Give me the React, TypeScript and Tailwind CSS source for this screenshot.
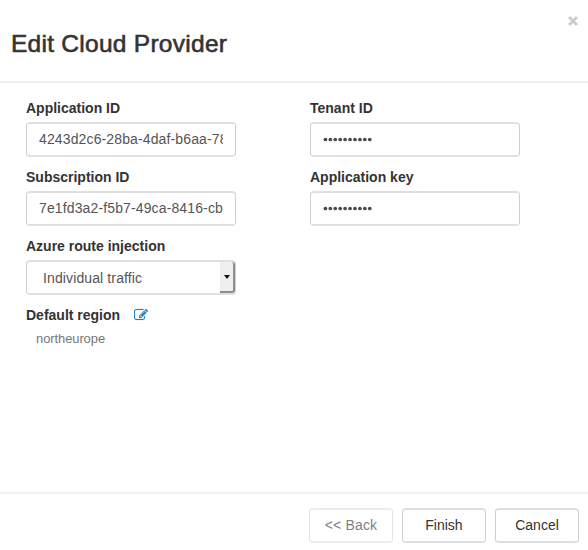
import React from "react";

const editPath =
  "M888 1184l116-116-152-152-116 116v56h96v96h56zm440-720q-16-16-33 1l-350 350q-17 17-1 33t33-1l350-350q17-17 1-33zm80 594v190q0 119-84.5 203.5t-203.5 84.5h-832q-119 0-203.5-84.5t-84.5-203.5v-832q0-119 84.5-203.5t203.5-84.5h832q63 0 117 25 15 7 18 23 3 17-9 29l-49 49q-14 14-32 8-23-6-45-6h-832q-66 0-113 47t-47 113v832q0 66 47 113t113 47h832q66 0 113-47t47-113v-126q0-13 9-22l64-64q15-15 35-7t20 29zm-96-738l288 288-672 672h-288v-288zm444 132l-92 92-288-288 92-92q28-28 68-28t68 28l152 152q28 28 28 68t-28 68z";

function Label({ children }: { children: React.ReactNode }) {
  return <div className="h-[23px] whitespace-nowrap text-[14px] leading-[18px] font-bold text-[#333]">{children}</div>;
}

const box = "h-[35px] w-[210px] rounded-[4px] border-x border-y-2 border-x-[#d0d0d0] border-y-[#e0e0e0] bg-white";

function TextField({ label, value }: { label: string; value: string }) {
  return (
    <div className="h-[69px]">
      <Label>{label}</Label>
      <div className={`${box} px-3`}>
        <div className="overflow-hidden whitespace-nowrap text-[14px] leading-[31px] tracking-[0.13px] text-[#555]">{value}</div>
      </div>
    </div>
  );
}

function SecretField({ label }: { label: string }) {
  return (
    <div className="h-[69px]">
      <Label>{label}</Label>
      <div className={`${box} flex items-center px-3`}>
        <svg className="h-[5px] w-[52px]" viewBox="0 0 52 5" fill="#4a4a4a">
          {Array.from({ length: 10 }, (_, i) => (
            <circle key={i} cx={2.4 + i * 4.93} cy={2.5} r={1.85} />
          ))}
        </svg>
      </div>
    </div>
  );
}

function Button({ children, disabled }: { children: React.ReactNode; disabled?: boolean }) {
  return (
    <button
      disabled={disabled}
      className={`h-[35px] w-[84px] rounded-[4px] border-x border-y-2 bg-white text-[14px] whitespace-nowrap ${
        disabled ? "border-x-[#e3e3e3] border-y-[#ececec] tracking-[0.15px] text-[#808080]" : "border-x-[#cfcfcf] border-y-[#dedede] text-[#333]"
      }`}
    >
      {children}
    </button>
  );
}

export default function App() {
  return (
    <div className="flex h-[550px] w-[588px] flex-col bg-white font-['Liberation_Sans',Arial,sans-serif]">
      <header className="flex h-[83px] items-start justify-between border-b-2 border-[#f0f0f0] pr-[10px] pl-[11px]">
        <h1 className="mt-[29px] text-[24.5px] leading-[30px] font-normal tracking-[0.27px] whitespace-nowrap text-[#333] [-webkit-text-stroke:0.6px_#333]">
          Edit Cloud Provider
        </h1>
        <button aria-label="Close" className="mt-4">
          <svg className="h-[10px] w-[10px]" viewBox="0 0 10 10" fill="none" stroke="#ccc" strokeWidth="2.8">
            <path d="M1 1l8 8M9 1L1 9" />
          </svg>
        </button>
      </header>
      <main className="flex flex-1 gap-[74px] pt-4 pl-[26px]">
        <section className="w-[210px]">
          <TextField label="Application ID" value="4243d2c6-28ba-4daf-b6aa-78" />
          <TextField label="Subscription ID" value="7e1fd3a2-f5b7-49ca-8416-cb" />
          <div className="h-[69px]">
            <Label>Azure route injection</Label>
            <div className={`${box} flex justify-between`}>
              <span className="pl-4 text-[14px] leading-8 tracking-[0.12px] text-[#555]">Individual traffic</span>
              <span className="flex w-[15px] items-center justify-center rounded-r-[3px] border-r-2 border-b-2 border-[#8d8d8d] bg-[#efefef]">
                <svg className="h-1 w-[6px]" viewBox="0 0 6 4"><path d="M0 0h6L3 4z" fill="#111" /></svg>
              </span>
            </div>
          </div>
          <div className="flex gap-[14px]">
            <Label>Default region</Label>
            <svg className="mt-[1.5px] size-[14px]" viewBox="0 0 1792 1792" fill="#2a7fc5" stroke="#2a7fc5" strokeWidth="20"><path d={editPath} /></svg>
          </div>
          <div className="mt-[2px] pl-[10px] text-[13px] leading-4 tracking-[-0.1px] text-[#777]">northeurope</div>
        </section>
        <section className="w-[210px]">
          <SecretField label="Tenant ID" />
          <SecretField label="Application key" />
        </section>
      </main>
      <footer className="flex h-[58px] justify-end gap-[9px] border-t-2 border-[#f0f0f0] pt-[14px] pr-[9px]">
        <Button disabled>{"<< Back"}</Button>
        <Button>Finish</Button>
        <Button>Cancel</Button>
      </footer>
    </div>
  );
}
